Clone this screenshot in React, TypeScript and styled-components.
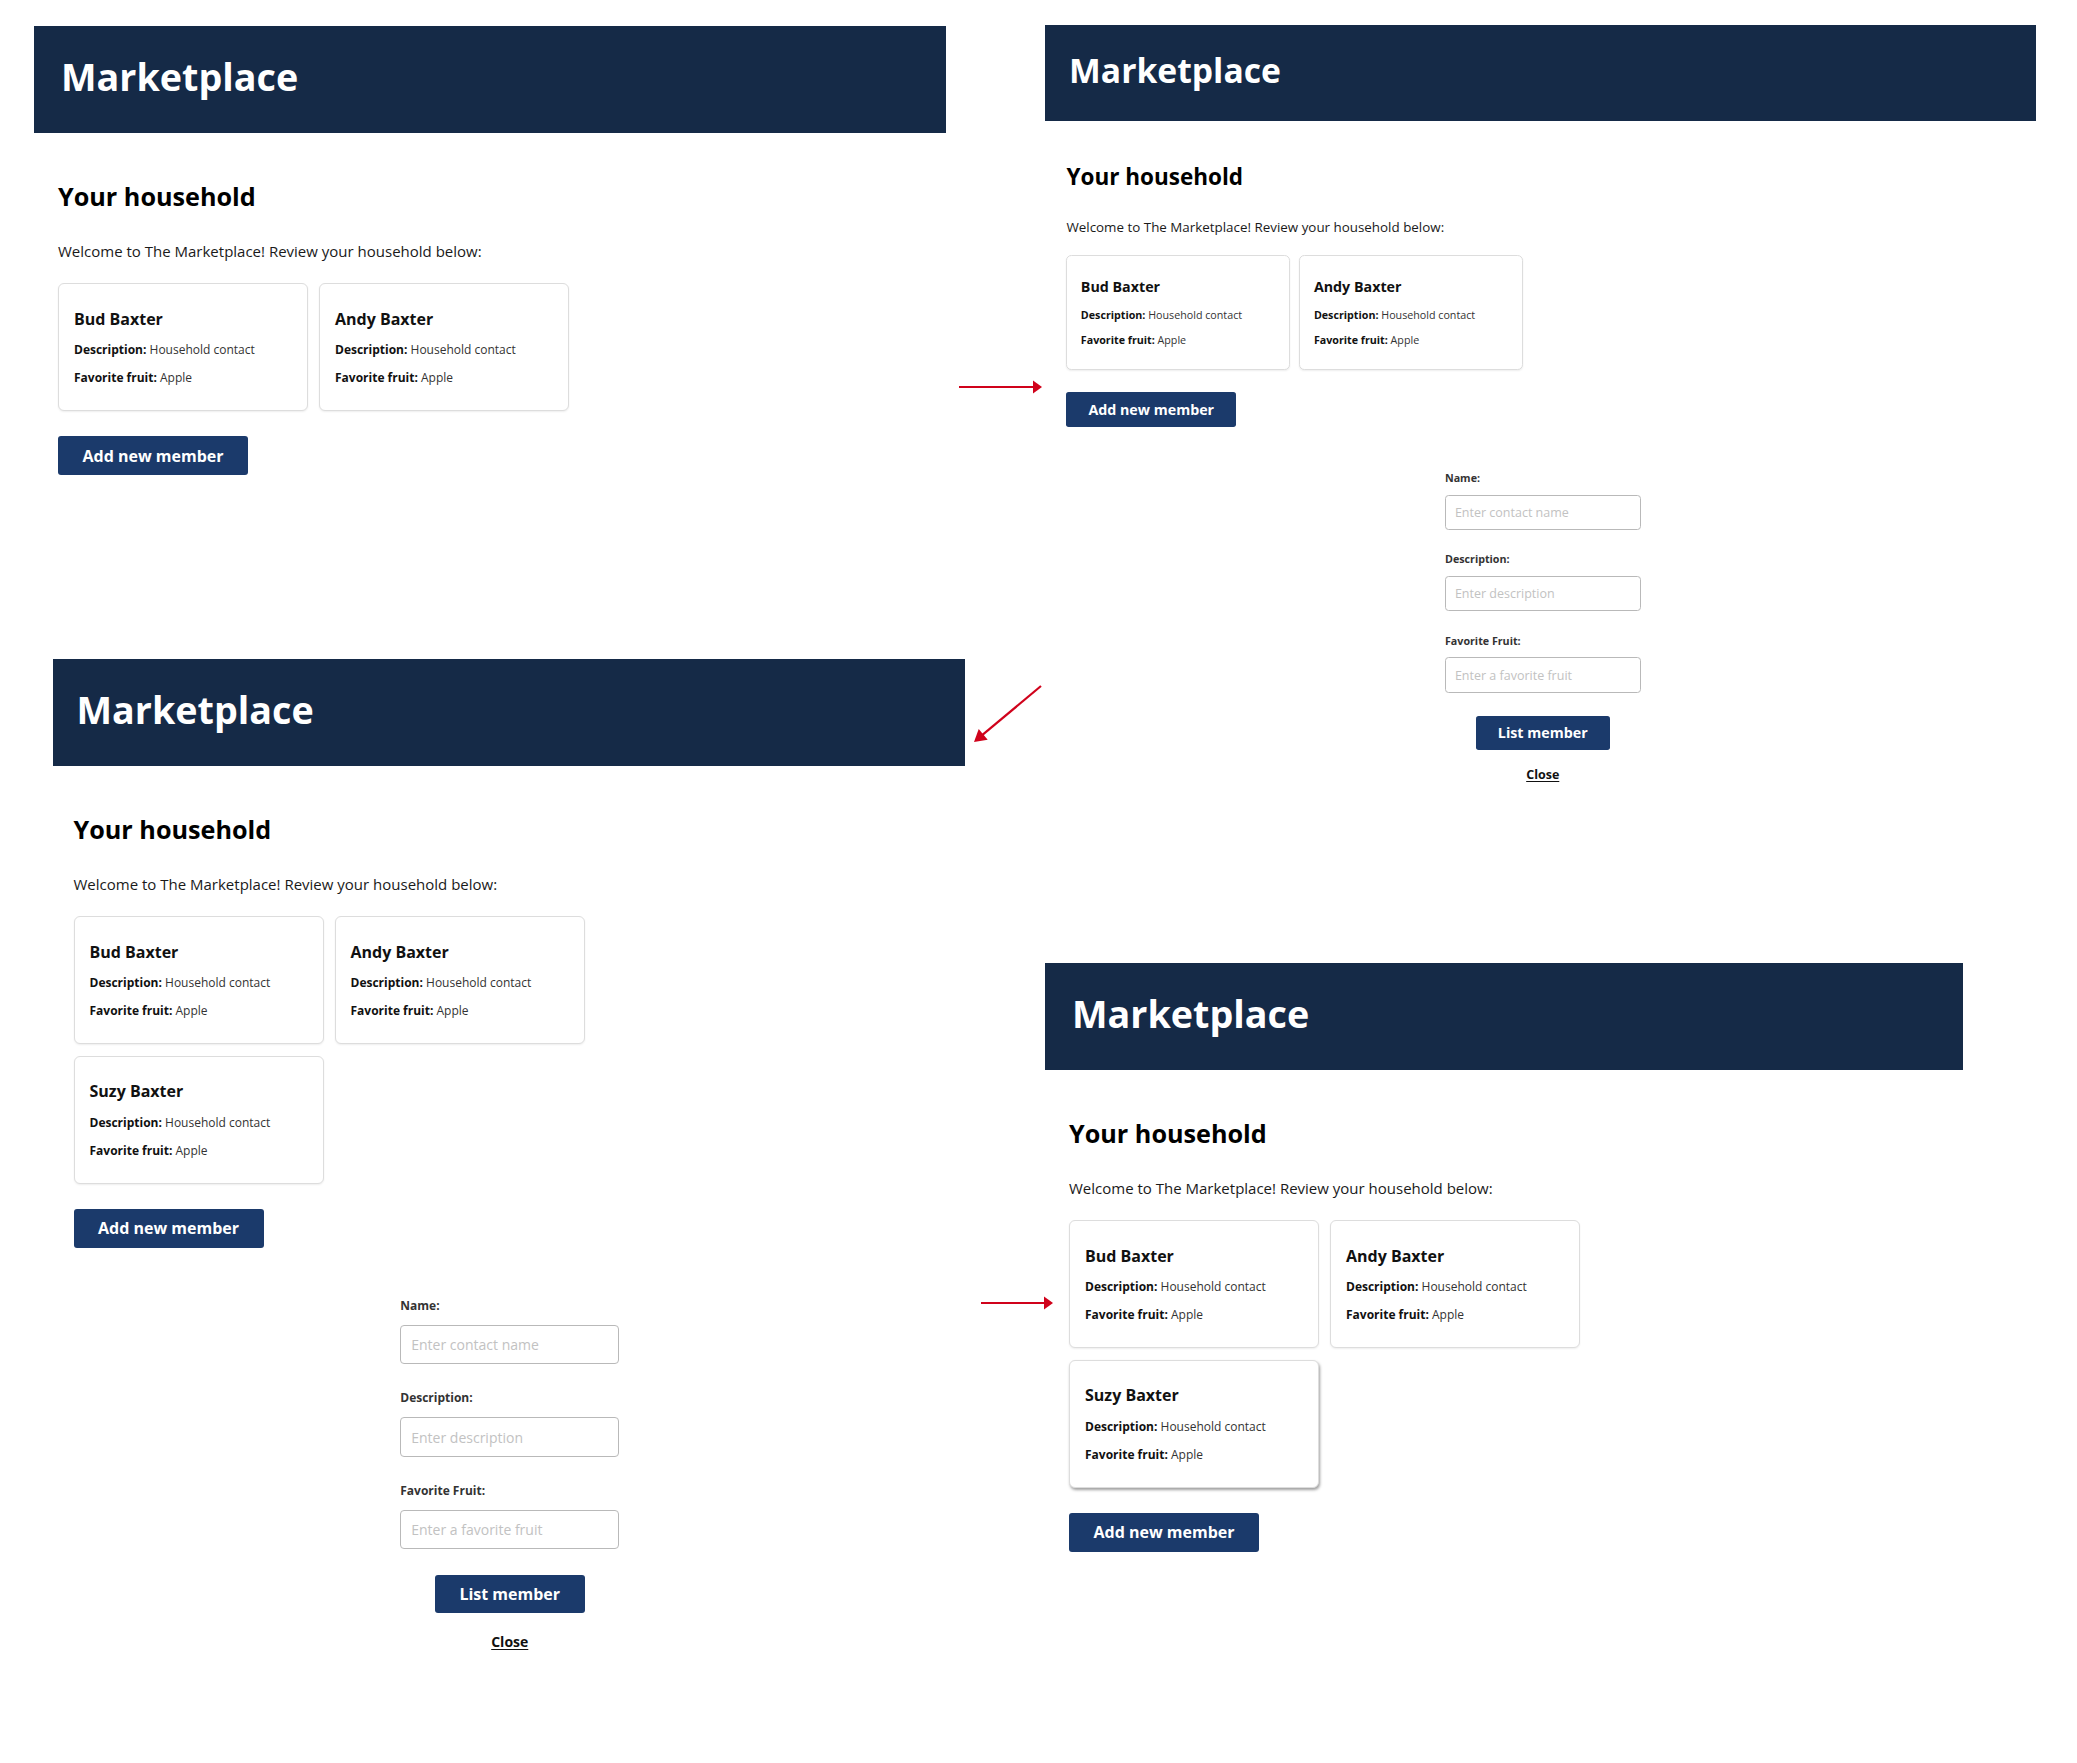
import React from "react";
import styled, { createGlobalStyle } from "styled-components";

const GlobalStyle = createGlobalStyle`
  html, body { margin: 0; padding: 0; background: #ffffff; }
  body { font-family: "Open Sans", "Liberation Sans", Arial, sans-serif; }
  *, *::before, *::after { box-sizing: border-box; }
`;

const u = (n: number) => `calc(${n}px * var(--s))`;

const Canvas = styled.div`
  position: relative;
  width: 2077px;
  height: 1763px;
  overflow: hidden;
  background: #ffffff;
`;

const Screen = styled.section<{ $x: number; $y: number; $w: number; $s: number; $shift: number }>`
  position: absolute;
  left: ${(p) => p.$x}px;
  top: ${(p) => p.$y}px;
  width: ${(p) => p.$w}px;
  --s: ${(p) => p.$s};
  --shift: ${(p) => p.$shift}px;
  font-family: "Open Sans", "Liberation Sans", Arial, sans-serif;
  color: #111111;
`;

const TopBar = styled.header`
  height: ${u(107)};
  background: #152a47;
  padding: ${u(24.7)} 0 0 calc(${u(27)} + var(--shift));
`;

const Title = styled.h1`
  margin: 0;
  font-size: ${u(37.7)};
  font-weight: 700;
  line-height: normal;
  color: #ffffff;
`;

const Body = styled.main`
  padding: 0 ${u(19)} 0 calc(${u(24)} + var(--shift));
`;

const Heading = styled.h2`
  margin: ${u(45.7)} 0 0;
  font-size: ${u(25.2)};
  font-weight: 700;
  line-height: normal;
  color: #000000;
`;

const Intro = styled.p`
  margin: ${u(28.6)} 0 0;
  font-size: ${u(15)};
  line-height: normal;
  color: #1a1a1a;
`;

const CardGrid = styled.div`
  margin-top: ${u(21.6)};
  display: grid;
  grid-template-columns: repeat(2, ${u(250)});
  column-gap: ${u(11)};
  row-gap: ${u(11.5)};
`;

const Card = styled.article<{ $raised?: boolean }>`
  background: #ffffff;
  border: 1px solid #dddddd;
  border-radius: ${u(6)};
  padding: ${u(23.8)} ${u(15)} ${u(24.4)};
  box-shadow: ${(p) =>
    p.$raised ? "1px 2px 3px rgba(0, 0, 0, 0.38)" : "0 1px 2px rgba(0, 0, 0, 0.07)"};
`;

const MemberName = styled.h3`
  margin: 0 0 ${u(12.2)};
  font-size: ${u(16)};
  font-weight: 700;
  line-height: ${u(22)};
  color: #111111;
`;

const Detail = styled.p`
  margin: 0;
  font-size: ${u(12)};
  line-height: ${u(16)};
  color: #333333;
  & + & {
    margin-top: ${u(11.9)};
  }
  b {
    font-weight: 700;
    color: #111111;
  }
`;

const PrimaryButton = styled.button<{ $w: number; $h: number }>`
  display: flex;
  align-items: center;
  justify-content: center;
  width: ${(p) => u(p.$w)};
  height: ${(p) => u(p.$h)};
  padding: 0;
  border: none;
  border-radius: ${u(3)};
  background: #1b3a6b;
  color: #ffffff;
  font-family: inherit;
  font-size: ${u(16)};
  font-weight: 700;
  cursor: pointer;
`;

const AddRow = styled.div`
  margin-top: ${u(25)};
`;

const Form = styled.form`
  width: ${u(219)};
  margin: ${u(49)} auto 0;
`;

const Field = styled.div`
  & + & {
    margin-top: ${u(25)};
  }
`;

const Label = styled.label`
  display: block;
  margin-bottom: ${u(11)};
  font-size: ${u(12)};
  font-weight: 700;
  line-height: normal;
  color: #333333;
`;

const Input = styled.input`
  display: block;
  width: 100%;
  height: ${u(39.5)};
  padding: 0 ${u(10)};
  border: 1px solid #b9b9b9;
  border-radius: ${u(4)};
  background: #ffffff;
  font-family: inherit;
  font-size: ${u(14)};
  color: #111111;
  &::placeholder {
    color: #c2c2c2;
  }
`;

const Actions = styled.div`
  display: flex;
  flex-direction: column;
  align-items: center;
  gap: ${u(18.5)};
  margin-top: ${u(26)};
`;

const CloseLink = styled.button`
  padding: 0;
  border: none;
  background: none;
  font-family: inherit;
  font-size: ${u(14)};
  font-weight: 700;
  line-height: normal;
  color: #111111;
  text-decoration: underline;
  text-underline-offset: 2px;
  cursor: pointer;
`;

const ArrowSvg = styled.svg<{ $x: number; $y: number }>`
  position: absolute;
  left: ${(p) => p.$x}px;
  top: ${(p) => p.$y}px;
  overflow: visible;
  pointer-events: none;
`;

type ArrowProps = { x1: number; y1: number; x2: number; y2: number; head?: number; half?: number };

function Arrow({ x1, y1, x2, y2, head = 9, half = 6.5 }: ArrowProps) {
  const left = Math.min(x1, x2) - 12;
  const top = Math.min(y1, y2) - 12;
  const w = Math.abs(x2 - x1) + 24;
  const h = Math.abs(y2 - y1) + 24;
  const a = Math.atan2(y2 - y1, x2 - x1);
  const c = Math.cos(a);
  const s = Math.sin(a);
  const bx = x2 - head * c;
  const by = y2 - head * s;
  const pts = `${x2},${y2} ${bx - half * s},${by + half * c} ${bx + half * s},${by - half * c}`;
  return (
    <ArrowSvg $x={left} $y={top} width={w} height={h} viewBox={`${left} ${top} ${w} ${h}`}>
      <line x1={x1} y1={y1} x2={bx + c} y2={by + s} stroke="#d0021b" strokeWidth={2.2} />
      <polygon points={pts} fill="#d0021b" />
    </ArrowSvg>
  );
}

type Member = { name: string; description: string; fruit: string };

const TWO: Member[] = [
  { name: "Bud Baxter", description: "Household contact", fruit: "Apple" },
  { name: "Andy Baxter", description: "Household contact", fruit: "Apple" },
];
const THREE: Member[] = [...TWO, { name: "Suzy Baxter", description: "Household contact", fruit: "Apple" }];

type ScreenSpec = {
  x: number;
  y: number;
  w: number;
  s: number;
  shift: number;
  members: Member[];
  form: boolean;
  raisedLast?: boolean;
};

const SCREENS: ScreenSpec[] = [
  { x: 34, y: 26, w: 912, s: 1, shift: 0, members: TWO, form: false },
  { x: 1045, y: 25, w: 991, s: 0.893, shift: 0, members: TWO, form: true },
  { x: 53, y: 659, w: 912, s: 1, shift: -3.5, members: THREE, form: true },
  { x: 1045, y: 963, w: 918, s: 1, shift: 0, members: THREE, form: false, raisedLast: true },
];

function MarketplaceScreen({ spec }: { spec: ScreenSpec }) {
  return (
    <Screen $x={spec.x} $y={spec.y} $w={spec.w} $s={spec.s} $shift={spec.shift}>
      <TopBar>
        <Title>Marketplace</Title>
      </TopBar>
      <Body>
        <Heading>Your household</Heading>
        <Intro>Welcome to The Marketplace! Review your household below:</Intro>
        <CardGrid>
          {spec.members.map((m, i) => (
            <Card key={m.name} $raised={spec.raisedLast && i === spec.members.length - 1}>
              <MemberName>{m.name}</MemberName>
              <Detail>
                <b>Description:</b> {m.description}
              </Detail>
              <Detail>
                <b>Favorite fruit:</b> {m.fruit}
              </Detail>
            </Card>
          ))}
        </CardGrid>
        <AddRow>
          <PrimaryButton type="button" $w={190} $h={39}>
            Add new member
          </PrimaryButton>
        </AddRow>
        {spec.form && (
          <Form onSubmit={(e) => e.preventDefault()}>
            <Field>
              <Label>Name:</Label>
              <Input placeholder="Enter contact name" />
            </Field>
            <Field>
              <Label>Description:</Label>
              <Input placeholder="Enter description" />
            </Field>
            <Field>
              <Label>Favorite Fruit:</Label>
              <Input placeholder="Enter a favorite fruit" />
            </Field>
            <Actions>
              <PrimaryButton type="submit" $w={150} $h={38}>
                List member
              </PrimaryButton>
              <CloseLink type="button">Close</CloseLink>
            </Actions>
          </Form>
        )}
      </Body>
    </Screen>
  );
}

export default function App() {
  return (
    <>
      <GlobalStyle />
      <Canvas>
        {SCREENS.map((spec, i) => (
          <MarketplaceScreen key={i} spec={spec} />
        ))}
        <Arrow x1={959} y1={387} x2={1042} y2={387} />
        <Arrow x1={1041} y1={686} x2={974} y2={742} head={12} half={7} />
        <Arrow x1={981} y1={1303} x2={1053} y2={1303} />
      </Canvas>
    </>
  );
}
